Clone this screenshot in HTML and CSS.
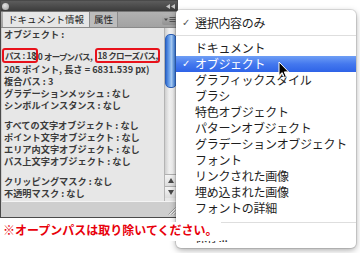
FILE: index.html
```html
<!DOCTYPE html>
<html lang="ja">
<head>
  <meta charset="UTF-8">
  <title>ドキュメント情報</title>
  <link rel="stylesheet" href="styles.css">
</head>
<body>
  <div class="stage">
    <div class="panel">
      <div class="titlebar">
        <span class="close"></span>
        <svg class="collapse" width="9" height="5" viewBox="0 0 9 5"><path d="M4 0L0 2.5L4 5ZM9 0L5 2.5L9 5Z" fill="#c4c4c4"/></svg>
      </div>
      <div class="tabs">
        <div class="tab active">ドキュメント情報</div>
        <div class="tab">属性</div>
        <div class="tab-fill"></div>
        <div class="menu-btn">
          <svg width="15" height="11" viewBox="0 0 15 11">
            <path d="M2 4.5h4L4 7Z" fill="#444"/>
            <path d="M7.5 3.5h6M7.5 5.5h6M7.5 7.5h6" stroke="#555" stroke-width="1"/>
          </svg>
        </div>
      </div>
      <div class="body">
        <div class="content">
          <div class="info">
            <div class="group">
              <div class="line">オブジェクト :</div>
            </div>
            <div class="group">
              <div class="line path"><span class="mark">パス : 18</span><span class="between">20 オープンパス,</span><span class="mark">18 クローズパス,</span></div>
              <div class="line">205 ポイント, 長さ = 6831.539 px)</div>
              <div class="line">複合パス : 3</div>
              <div class="line">グラデーションメッシュ : なし</div>
              <div class="line">シンボルインスタンス : なし</div>
            </div>
            <div class="group">
              <div class="line">すべての文字オブジェクト : なし</div>
              <div class="line">ポイント文字オブジェクト : なし</div>
              <div class="line">エリア内文字オブジェクト : なし</div>
              <div class="line">パス上文字オブジェクト : なし</div>
            </div>
            <div class="group last">
              <div class="line">クリッピングマスク : なし</div>
              <div class="line">不透明マスク : なし</div>
            </div>
          </div>
          <div class="scrollbar">
            <div class="track"><div class="thumb"></div></div>
            <div class="arrow up"></div>
            <div class="arrow down"></div>
          </div>
        </div>
        <div class="footer">
          <svg width="9" height="9" viewBox="0 0 9 9">
            <path d="M8.5 1.5L1.5 8.5M8.5 4.5L4.5 8.5M8.5 7.5L7.5 8.5" stroke="#9a9a9a" stroke-width="1"/>
            <path d="M8.5 2.5L2.5 8.5M8.5 5.5L5.5 8.5" stroke="#f2f2f2" stroke-width="1"/>
          </svg>
        </div>
      </div>
    </div>

    <p class="note">※オープンパスは取り除いてください。</p>

    <ul class="menu">
      <li class="item"><span class="check">✓</span>選択内容のみ</li>
      <li class="sep"></li>
      <li class="item"><span class="check"></span>ドキュメント</li>
      <li class="item on"><span class="check">✓</span>オブジェクト</li>
      <li class="item"><span class="check"></span>グラフィックスタイル</li>
      <li class="item"><span class="check"></span>ブラシ</li>
      <li class="item"><span class="check"></span>特色オブジェクト</li>
      <li class="item"><span class="check"></span>パターンオブジェクト</li>
      <li class="item"><span class="check"></span>グラデーションオブジェクト</li>
      <li class="item"><span class="check"></span>フォント</li>
      <li class="item"><span class="check"></span>リンクされた画像</li>
      <li class="item"><span class="check"></span>埋め込まれた画像</li>
      <li class="item"><span class="check"></span>フォントの詳細</li>
      <li class="sep wide"></li>
      <li class="item"><span class="check"></span>保存...</li>
    </ul>

    <svg class="cursor" width="12" height="18" viewBox="0 0 12 18">
      <path d="M1 1L1 14.5L4.2 11.6L6.4 16.6L8.4 15.7L6.3 10.9L10.6 10.9Z" fill="#000" stroke="#fff" stroke-width="1" stroke-linejoin="round"/>
    </svg>
  </div>
</body>
</html>
```

FILE: styles.css
```css
html, body {
  margin: 0;
  padding: 0;
  background: #fff;
  font-family: "Noto Sans CJK JP", "Liberation Sans", sans-serif;
}
.stage {
  position: relative;
  width: 360px;
  height: 253px;
  overflow: hidden;
}
.panel {
  width: 178px;
  height: 218px;
  box-sizing: border-box;
  border: 1px solid #4a4a4a;
  background: #cecece;
  display: flex;
  flex-direction: column;
}
.titlebar {
  height: 10px;
  background: linear-gradient(#5c5c5c, #3c3c3c);
  display: flex;
  align-items: center;
  justify-content: space-between;
  padding: 0 2px 0 1px;
}
.close {
  width: 7px;
  height: 7px;
  border-radius: 50%;
  background: radial-gradient(circle at 40% 35%, #e4e4e4, #9a9a9a);
}
.tabs {
  height: 15px;
  border-top: 1px solid #777;
  border-bottom: 1px solid #8a8a8a;
  background: linear-gradient(#b2b2b2, #a2a2a2);
  display: flex;
  padding-left: 2px;
}
.tab {
  font-size: 9.5px;
  line-height: 15px;
  color: #222;
  padding: 0 4px;
  background: #bcbcbc;
  border-right: 1px solid #8c8c8c;
}
.tab.active {
  background: #e6e6e6;
  padding: 0 5px;
}
.tab-fill { flex: 1; }
.menu-btn {
  width: 15px;
  height: 11px;
  margin: 2px 0 0;
  border-radius: 2px;
  background: linear-gradient(#b4b4b4, #929292);
}
.menu-btn svg { display: block; }
.body {
  flex: 1;
  display: flex;
  flex-direction: column;
}
.content {
  height: 174px;
  display: flex;
  margin-left: 1px;
  background: #e7e7e7;
  border-bottom: 1px solid #f4f4f4;
  box-sizing: border-box;
}
.info {
  flex: 1;
  padding-left: 2px;
  font-size: 9.2px;
  line-height: 12px;
  font-weight: bold;
  color: #3b3b3b;
  white-space: nowrap;
  overflow: hidden;
}
.group { margin-bottom: 8px; }
.group.last { margin-top: 1px; }
.line.path {
  height: 15px;
  display: flex;
  align-items: center;
  margin-left: -2px;
  font-size: 8.5px;
  letter-spacing: -0.3px;
  font-feature-settings: "palt";
}
.mark {
  position: relative;
  z-index: 1;
  border: 2px solid #e8121b;
  border-radius: 3px;
  padding: 0 0 0 1px;
  line-height: 11px;
}
.between {
  margin-left: -5px;
  padding-right: 2px;
}
.scrollbar {
  width: 12px;
  display: flex;
  flex-direction: column;
  border-left: 1px solid #b4b4b4;
  padding-bottom: 3px;
}
.track {
  flex: 1;
  background: linear-gradient(to right, #cfcfcf, #efefef 35%, #f3f3f3 65%, #d8d8d8);
}
.thumb {
  margin: 6px 0 0;
  height: 54px;
  box-sizing: border-box;
  border: 1px solid #2c5fb6;
  border-radius: 5px;
  background: linear-gradient(to right, #2f6ad0, #74a8ec 35%, #a8cdf7 55%, #4f8ce2 85%, #2c64c8);
}
.arrow {
  height: 12px;
  box-sizing: border-box;
  border-top: 1px solid #b0b0b0;
  background: linear-gradient(#f4f4f4, #dcdcdc);
  display: flex;
  align-items: center;
  justify-content: center;
}
.arrow::after {
  content: "";
  border-left: 3px solid transparent;
  border-right: 3px solid transparent;
}
.arrow.up::after { border-bottom: 5px solid #4a4a4a; }
.arrow.down::after { border-top: 5px solid #4a4a4a; }
.footer {
  flex: 1;
  display: flex;
  justify-content: flex-end;
  align-items: flex-end;
  padding: 0 1px 2px 0;
}
.note {
  display: block;
  width: fit-content;
  position: relative;
  z-index: 2;
  margin: 4px 0 0;
  padding: 0 3px 3px 3px;
  background: #fff;
  color: #e8000b;
  font-size: 12px;
  line-height: 16px;
  font-weight: bold;
}
.menu {
  position: absolute;
  z-index: 1;
  left: 176px;
  top: 10px;
  width: 180px;
  height: 238px;
  box-sizing: border-box;
  margin: 0;
  padding: 5px 0 0;
  list-style: none;
  background: #fff;
  border-radius: 4px 5px 5px 5px;
  box-shadow: 0 2px 6px rgba(0, 0, 0, 0.35), 0 0 0 1px rgba(0, 0, 0, 0.1);
  font-size: 12px;
  letter-spacing: -0.3px;
  color: #1e1e1e;
}
.item {
  height: 16px;
  line-height: 16px;
  display: flex;
  padding-left: 6px;
  white-space: nowrap;
}
.check {
  width: 13px;
  font-family: "DejaVu Sans", sans-serif;
  font-size: 10px;
  color: #555;
}
.item.on {
  background: linear-gradient(#6e9ef5, #4478ee 50%, #2e63e7);
  color: #fff;
}
.item.on .check { color: #fff; }
.sep {
  height: 1px;
  margin: 4px 0;
  background: #dedede;
}
.sep.wide { margin: 6px 0; }
.cursor {
  position: absolute;
  z-index: 3;
  left: 278px;
  top: 61px;
}
```
